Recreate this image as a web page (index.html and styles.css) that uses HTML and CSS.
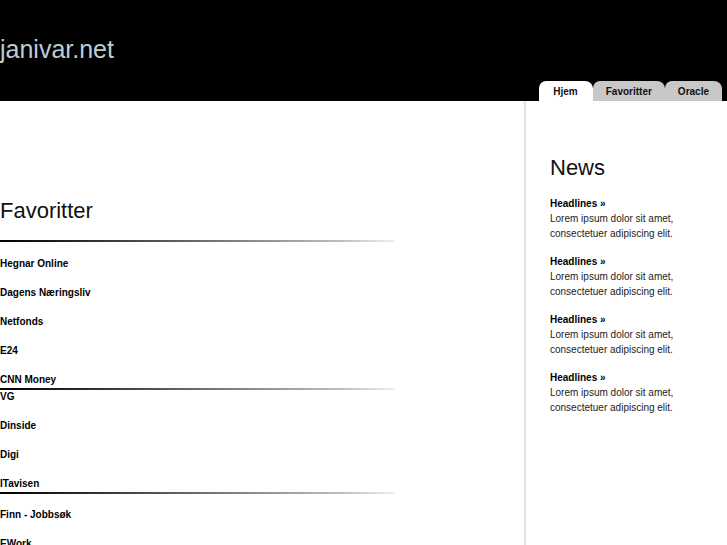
FILE: index.html
```html
<!DOCTYPE html>
<html lang="no">
<head>
<meta charset="utf-8">
<title>janivar.net</title>
<link rel="stylesheet" href="styles.css">
</head>
<body>
<header class="header">
  <div class="site-title">janivar.net</div>
  <nav class="tabs">
    <a class="tab tab-active" href="#">Hjem</a>
    <a class="tab" href="#">Favoritter</a>
    <a class="tab" href="#">Oracle</a>
  </nav>
</header>
<div class="page">
  <main class="main">
    <h2 class="main-title">Favoritter</h2>
    <div class="sep sep-head"></div>
    <ul class="links">
      <li class="link">Hegnar Online</li>
      <li class="link">Dagens Næringsliv</li>
      <li class="link">Netfonds</li>
      <li class="link">E24</li>
      <li class="link link-last">CNN Money</li>
    </ul>
    <div class="sep sep-mid"></div>
    <ul class="links">
      <li class="link">VG</li>
      <li class="link">Dinside</li>
      <li class="link">Digi</li>
      <li class="link link-last">ITavisen</li>
    </ul>
    <div class="sep sep-after"></div>
    <ul class="links">
      <li class="link">Finn - Jobbsøk</li>
      <li class="link">EWork</li>
    </ul>
  </main>
  <aside class="sidebar">
    <h2 class="side-title">News</h2>
    <div class="news">
      <div class="news-item">
        <div class="news-head">Headlines »</div>
        <p class="news-text">Lorem ipsum dolor sit amet,<br>consectetuer adipiscing elit.</p>
      </div>
      <div class="news-item">
        <div class="news-head">Headlines »</div>
        <p class="news-text">Lorem ipsum dolor sit amet,<br>consectetuer adipiscing elit.</p>
      </div>
      <div class="news-item">
        <div class="news-head">Headlines »</div>
        <p class="news-text">Lorem ipsum dolor sit amet,<br>consectetuer adipiscing elit.</p>
      </div>
      <div class="news-item">
        <div class="news-head">Headlines »</div>
        <p class="news-text">Lorem ipsum dolor sit amet,<br>consectetuer adipiscing elit.</p>
      </div>
    </div>
  </aside>
</div>
</body>
</html>
```
FILE: styles.css
```css
* { box-sizing: border-box; }
html, body { margin: 0; padding: 0; }
body {
  background: #fff;
  font-family: "Liberation Sans", Arial, sans-serif;
  color: #111;
  overflow: hidden;
  height: 545px;
}
.header {
  background: #000;
  height: 101px;
  display: flex;
  justify-content: space-between;
}
.site-title {
  padding-top: 35px;
  font-size: 25px;
  line-height: 28px;
  color: #bdccd4;
}
.tabs {
  align-self: flex-end;
  display: flex;
  margin-right: 5px;
}
.tab {
  display: block;
  height: 20px;
  line-height: 19px;
  padding: 1px 13px 0;
  background: #c8c8c8;
  color: #111;
  font-size: 10px;
  font-weight: bold;
  text-decoration: none;
  border-radius: 7px 8px 0 0;
}
.tab-active {
  background: #fff;
  padding: 1px 15px 0 14px;
}
.page {
  display: flex;
  height: 444px;
}
.main {
  width: 524px;
  padding-top: 97px;
}
.main-title {
  margin: 0;
  font-size: 22px;
  line-height: 26px;
  font-weight: normal;
  color: #111;
}
.sep {
  width: 395px;
  height: 2px;
  margin-top: 2px;
  background: linear-gradient(to right, #000 0%, #333 25%, #777 55%, #bbb 85%, #eee 100%);
}
.sep-head { margin-top: 16px; margin-bottom: 16px; }
.sep-mid { margin-bottom: 1px; }
.sep-after { margin-bottom: 15px; }
.links {
  list-style: none;
  margin: 0;
  padding: 0;
}
.link {
  font-size: 10px;
  line-height: 12px;
  font-weight: bold;
  color: #000;
  margin-bottom: 17px;
  white-space: nowrap;
}
.link-last { margin-bottom: 0; }
.sidebar {
  width: 203px;
  border-left: 2px solid #e2e2e2;
  padding-left: 24px;
  padding-top: 54px;
}
.side-title {
  margin: 0 0 15px;
  font-size: 22px;
  line-height: 26px;
  font-weight: normal;
  color: #111;
}
.news-item { margin-bottom: 13px; }
.news-head {
  font-size: 10px;
  line-height: 15px;
  font-weight: bold;
  color: #000;
}
.news-text {
  margin: 0;
  font-size: 10px;
  line-height: 15px;
  color: #222;
}
```
